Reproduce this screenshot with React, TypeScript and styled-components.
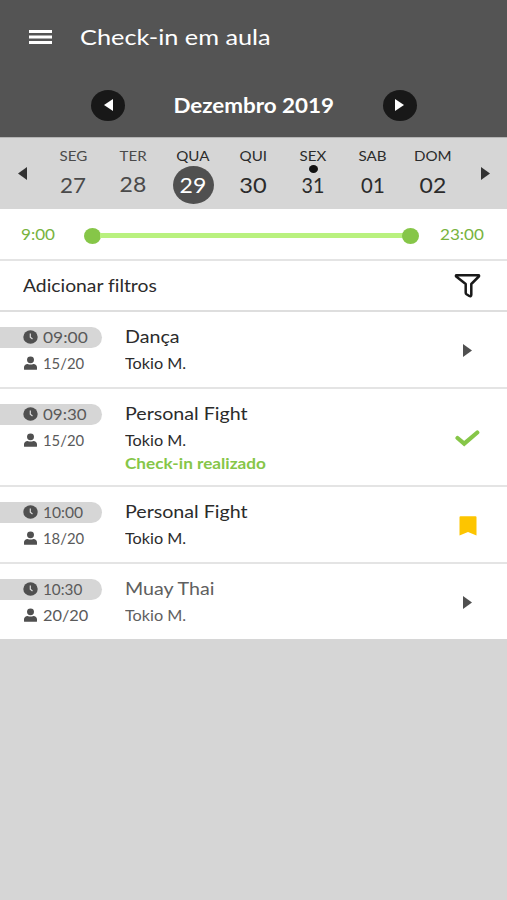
import React from "react";
import styled, { createGlobalStyle } from "styled-components";

const GlobalStyle = createGlobalStyle`
  * { box-sizing: border-box; }
  html, body { margin: 0; background: #d6d6d6; }
  body { font-family: Lato, "Open Sans", sans-serif; color: #2b2b2b; font-variant-ligatures: none; }
  button { border: 0; padding: 0; background: none; font: inherit; color: inherit; }
`;

const Screen = styled.main`
  width: 507px;
  height: 900px;
  overflow: hidden;
  background: #d6d6d6;
`;

const Text = styled.span<{ $size: number; $stretch?: number; $color?: string; $weight?: number; $line?: number; $origin?: string }>`
  display: block;
  width: max-content;
  margin: 0;
  white-space: nowrap;
  font-size: ${(p) => p.$size}px;
  font-weight: ${(p) => p.$weight ?? 400};
  line-height: ${(p) => p.$line ?? 20}px;
  color: ${(p) => p.$color ?? "inherit"};
  transform: scaleX(${(p) => p.$stretch ?? 1.12});
  transform-origin: ${(p) => p.$origin ?? "left"} center;
`;

const Header = styled.header`
  height: 137px;
  background: #545454;
  color: #fff;
`;

const TitleBar = styled.div`
  display: flex;
  align-items: center;
  height: 74px;
  padding-left: 29px;
`;

const MenuButton = styled.button`
  display: flex;
  width: 51px;
`;

const MonthBar = styled.div`
  display: flex;
  align-items: center;
  justify-content: space-between;
  height: 62px;
  padding: 0 90px 0 91px;
`;

const RoundButton = styled.button`
  display: grid;
  place-items: center;
  width: 34px;
  height: 31px;
  border-radius: 50%;
  background: #181818;
`;

const Week = styled.section`
  display: grid;
  grid-template-columns: 43px repeat(7, 60px) 1fr;
  height: 72px;
  border-top: 1px solid #b4b4b4;
  background: #d6d6d6;
`;

const WeekArrow = styled.button`
  display: flex;
  align-items: center;
  justify-content: flex-start;
  padding-left: 18px;
`;

const Day = styled.div`
  display: flex;
  flex-direction: column;
  align-items: center;
  padding-top: 8px;
  position: relative;
`;

const DayNumber = styled.div<{ $selected?: boolean; $raised?: boolean }>`
  display: grid;
  place-items: center;
  width: 41px;
  height: 38px;
  margin-top: ${(p) => (p.$raised ? -1 : 0)}px;
  border-radius: 50%;
  background: ${(p) => (p.$selected ? "#505050" : "transparent")};
`;

const EventDot = styled.i`
  position: absolute;
  top: 27px;
  left: 25.5px;
  width: 9px;
  height: 8px;
  border-radius: 50%;
  background: #111;
`;

const TimeRange = styled.section`
  display: flex;
  align-items: center;
  height: 52px;
  padding: 2px 0 0 21px;
  border-bottom: 2px solid #e4e4e4;
  background: #fff;
`;

const RangeLabel = styled.div`
  width: 63px;
  height: 22px;
`;

const Track = styled.div`
  display: flex;
  align-items: center;
  width: 335px;
  margin: 1px 21px 0 0;
`;

const Knob = styled.span`
  width: 17px;
  height: 16px;
  border-radius: 50%;
  background: #86c648;
`;

const Bar = styled.span`
  flex: 1;
  height: 5px;
  margin: 0 -1px;
  background: #b9f17f;
`;

const FilterRow = styled.section`
  display: flex;
  align-items: center;
  justify-content: space-between;
  height: 51px;
  padding: 0 26px 0 23px;
  border-bottom: 2px solid #dedede;
  background: #fff;
`;

const ClassRow = styled.article<{ $height: number }>`
  display: grid;
  grid-template-columns: 125px 1fr 78px;
  height: ${(p) => p.$height}px;
  border-bottom: 2px solid #e4e4e4;
  background: #fff;

  &:last-child { border-bottom: 0; }
`;

const Slot = styled.div`
  padding-top: 15px;
  color: #5a5a5a;
`;

const Meta = styled.div<{ $filled?: boolean }>`
  display: flex;
  align-items: center;
  width: 102px;
  height: ${(p) => (p.$filled ? 21 : 20)}px;
  margin-bottom: 5px;
  padding: 0 0 1px 23px;
  border-radius: 0 11px 11px 0;
  background: ${(p) => (p.$filled ? "#d6d6d6" : "transparent")};
`;

const MetaIcon = styled.span`
  display: flex;
  width: 20px;
`;

const Details = styled.div<{ $muted?: boolean }>`
  padding-top: 15px;
  color: ${(p) => (p.$muted ? "#606060" : "#2b2b2b")};
`;

const Line = styled.div<{ $height: number }>`
  height: ${(p) => p.$height}px;
`;

const Status = styled.div`
  display: grid;
  place-items: center;
  padding: 2px 1px 0 0;
`;

const Arrow = ({ left = false, color = "#444", w = 9, h = 13 }: { left?: boolean; color?: string; w?: number; h?: number }) => (
  <svg width={w} height={h} viewBox="0 0 9 13" preserveAspectRatio="none">
    <path d={left ? "M9 0v13L0 6.5z" : "M0 0v13l9-6.5z"} fill={color} />
  </svg>
);

const MenuIcon = () => (
  <svg width="23" height="14" viewBox="0 0 23 14">
    <path d="M0 1.5h23M0 7h23M0 12.5h23" stroke="#fff" strokeWidth="2.9" />
  </svg>
);

const FilterIcon = () => (
  <svg width="27" height="25" viewBox="0 0 27 25" fill="none">
    <path d="M2.500 2.200h22c.7 0 .8.800.3 1.300L17.300 11v10.800c0 1.200-1 1.700-2 1.200l-2.800-1.700c-.6-.4-.8-.8-.8-1.500V11L2.200 3.500C1.700 3 1.800 2.200 2.500 2.200z" stroke="#191919" strokeWidth="2.500" strokeLinejoin="round" />
  </svg>
);

const ClockIcon = () => (
  <svg width="15" height="14" viewBox="0 0 15 14">
    <ellipse cx="7.500" cy="7" rx="7.200" ry="6.700" fill="#505050" />
    <path d="M7.300 3.600v3.700l2.200 1.700" stroke="#ddd" strokeWidth="1.200" fill="none" />
  </svg>
);

const PersonIcon = () => (
  <svg width="15" height="14" viewBox="0 0 15 14" fill="#505050">
    <ellipse cx="7.500" cy="3.800" rx="3.500" ry="3.400" />
    <path d="M1 13.200v-1.900c0-2 1.500-3.300 3.600-3.300 2 .8 3.800.8 5.800 0 2.100 0 3.600 1.300 3.600 3.300v1.900q0 .6-.7.6H1.700q-.7 0-.7-.6z" />
  </svg>
);

const CheckIcon = () => (
  <svg width="25" height="17" viewBox="0 0 25 17">
    <path d="M2.500 8l6.700 5.700L22.300 2.500" stroke="#86c648" strokeWidth="4.200" strokeLinecap="round" fill="none" />
  </svg>
);

const BookmarkIcon = () => (
  <svg width="18" height="20" viewBox="0 0 18 20">
    <path d="M1.500.3h15q1 0 1 1v18.200L9 15.900.5 19.500V1.300q0-1 1-1z" fill="#fdc500" />
  </svg>
);

type DayItem = { name: string; date: string; color: string; stretch?: number; selected?: boolean; event?: boolean; raised?: boolean };
const days: DayItem[] = [
  { name: "SEG", date: "27", color: "#4a4a4a", stretch: 1.09 },
  { name: "TER", date: "28", color: "#4a4a4a", raised: true },
  { name: "QUA", date: "29", color: "#2b2b2b", selected: true },
  { name: "QUI", date: "30", color: "#2b2b2b", stretch: 1.15 },
  { name: "SEX", date: "31", color: "#2b2b2b", stretch: 0.96, event: true },
  { name: "SAB", date: "01", color: "#2b2b2b", stretch: 0.99 },
  { name: "DOM", date: "02", color: "#2b2b2b" },
];

type Kind = "open" | "done" | "saved";
type ClassItem = { time: string; timeStretch: number; seats: string; seatStretch: number; title: string; kind: Kind; height: number; muted?: boolean };
const classes: ClassItem[] = [
  { time: "09:00", timeStretch: 1.16, seats: "15/20", seatStretch: 0.99, title: "Dança", kind: "open", height: 77 },
  { time: "09:30", timeStretch: 1.13, seats: "15/20", seatStretch: 0.99, title: "Personal Fight", kind: "done", height: 98 },
  { time: "10:00", timeStretch: 1.04, seats: "18/20", seatStretch: 0.99, title: "Personal Fight", kind: "saved", height: 77 },
  { time: "10:30", timeStretch: 1.02, seats: "20/20", seatStretch: 1.09, title: "Muay Thai", kind: "open", height: 75, muted: true },
];

const statusIcons: Record<Kind, React.ReactNode> = {
  open: <Arrow color="#505050" />,
  done: <CheckIcon />,
  saved: <BookmarkIcon />,
};

export default function App() {
  return (
    <Screen>
      <GlobalStyle />
      <Header>
        <TitleBar>
          <MenuButton aria-label="Menu"><MenuIcon /></MenuButton>
          <Text as="h1" $size={22} $stretch={1.15} $line={28}>Check-in em aula</Text>
        </TitleBar>
        <MonthBar>
          <RoundButton aria-label="Mês anterior"><Arrow left color="#fff" w={9} h={12} /></RoundButton>
          <Text $size={20} $weight={700} $origin="center" $line={26}>Dezembro 2019</Text>
          <RoundButton aria-label="Próximo mês"><Arrow color="#fff" w={9} h={12} /></RoundButton>
        </MonthBar>
      </Header>
      <Week>
        <WeekArrow aria-label="Semana anterior"><Arrow left color="#333" /></WeekArrow>
        {days.map((d) => (
          <Day key={d.name}>
            <Text $size={13.5} $origin="center" $color={d.color}>{d.name}</Text>
            {d.event && <EventDot />}
            <DayNumber $selected={d.selected} $raised={d.raised}>
              <Text $size={20.5} $origin="center" $stretch={d.stretch} $color={d.selected ? "#fff" : d.color} $line={24}>{d.date}</Text>
            </DayNumber>
          </Day>
        ))}
        <WeekArrow aria-label="Próxima semana"><Arrow color="#333" /></WeekArrow>
      </Week>
      <TimeRange>
        <RangeLabel><Text $size={15} $stretch={1.14} $color="#78b33e">9:00</Text></RangeLabel>
        <Track><Knob /><Bar /><Knob /></Track>
        <RangeLabel><Text $size={15} $stretch={1.14} $color="#78b33e">23:00</Text></RangeLabel>
      </TimeRange>
      <FilterRow>
        <Text $size={17} $stretch={1.135}>Adicionar filtros</Text>
        <FilterIcon />
      </FilterRow>
      <section>
        {classes.map((c) => (
          <ClassRow key={c.time} $height={c.height}>
            <Slot>
              <Meta $filled><MetaIcon><ClockIcon /></MetaIcon><Text $size={15} $stretch={c.timeStretch}>{c.time}</Text></Meta>
              <Meta><MetaIcon><PersonIcon /></MetaIcon><Text $size={15} $stretch={c.seatStretch}>{c.seats}</Text></Meta>
            </Slot>
            <Details $muted={c.muted}>
              <Line $height={26}><Text $size={17} $stretch={1.155}>{c.title}</Text></Line>
              <Line $height={24}><Text $size={15} $stretch={1.08}>Tokio M.</Text></Line>
              {c.kind === "done" && <Text $size={14.5} $weight={700} $stretch={1.185} $color="#86c648">Check-in realizado</Text>}
            </Details>
            <Status>{statusIcons[c.kind]}</Status>
          </ClassRow>
        ))}
      </section>
    </Screen>
  );
}
